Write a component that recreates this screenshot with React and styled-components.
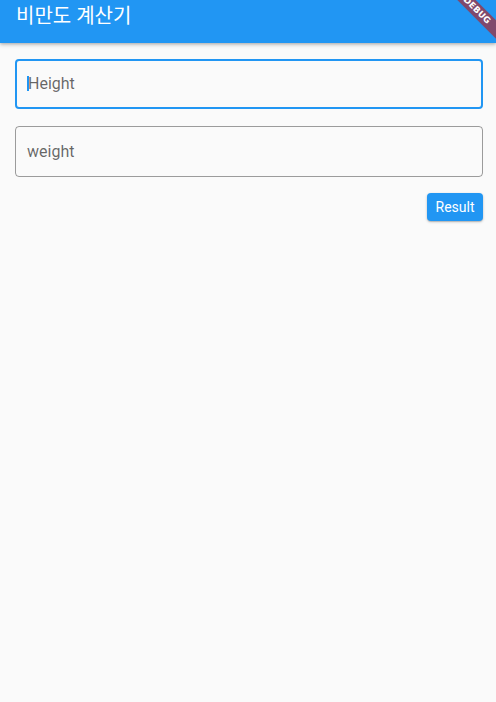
import React from "react";
import styled, { createGlobalStyle } from "styled-components";

const Global = createGlobalStyle`
  html, body { margin: 0; padding: 0; background: #fafafa; }
  body { font-family: Roboto, "Noto Sans", sans-serif; }
`;

const Screen = styled.div`
  position: relative;
  width: 496px;
  height: 702px;
  overflow: hidden;
  background: #fafafa;
`;

const AppBar = styled.header`
  height: 43px;
  background: #2196f3;
  box-shadow: 0 2px 4px rgba(0, 0, 0, 0.2), 0 1px 2px rgba(0, 0, 0, 0.12);
  display: flex;
  align-items: flex-start;
  padding: 2px 16px 0;
  box-sizing: border-box;
`;

const Title = styled.h1`
  margin: 0;
  font-family: Roboto, "Noto Sans CJK KR", sans-serif;
  font-weight: 400;
  font-size: 20px;
  line-height: 28px;
  color: #fff;
`;

const Body = styled.main`
  display: flex;
  flex-direction: column;
  padding: 16px 13px 0 15px;
`;

const Field = styled.div`
  position: relative;
  box-sizing: border-box;
  border-radius: 4px;
  border: ${(p) => (p.$focused ? "2px solid #2196f3" : "1px solid rgba(0,0,0,0.38)")};
  padding-left: ${(p) => (p.$focused ? "11px" : "11px")};
  display: flex;
  align-items: center;
  margin-bottom: ${(p) => p.$mb || 0}px;
  height: ${(p) => p.$h}px;
`;

const Placeholder = styled.span`
  font-family: Roboto, sans-serif;
  font-size: 16px;
  color: rgba(0, 0, 0, 0.6);
  line-height: 20px;
`;

const Cursor = styled.span`
  position: absolute;
  left: 10px;
  top: 15px;
  width: 2px;
  height: 15px;
  background: #2196f3;
`;

const Actions = styled.div`
  display: flex;
  justify-content: flex-end;
  margin-top: 16px;
`;

const Button = styled.button`
  height: 28px;
  width: 56px;
  border: none;
  border-radius: 4px;
  background: #2196f3;
  color: #fff;
  font-family: Roboto, sans-serif;
  font-size: 14px;
  font-weight: 400;
  padding: 0;
  box-shadow: 0 1px 3px rgba(0, 0, 0, 0.2), 0 1px 1px rgba(0, 0, 0, 0.14);
`;

const Banner = styled.div`
  position: absolute;
  left: 437px;
  top: 3.5px;
  width: 80px;
  height: 13px;
  transform: rotate(45deg);
  background: rgba(183, 28, 28, 0.63);
  color: #fff;
  font-family: "DejaVu Sans", sans-serif;
  font-weight: 700;
  font-size: 8.5px;
  line-height: 13px;
  text-align: center;
  letter-spacing: 0.2px;
`;

export default function App() {
  return (
    <Screen>
      <Global />
      <AppBar>
        <Title>비만도 계산기</Title>
      </AppBar>
      <Body>
        <Field $focused $h={50} $mb={17}>
          <Cursor />
          <Placeholder>Height</Placeholder>
        </Field>
        <Field $h={51}>
          <Placeholder>weight</Placeholder>
        </Field>
        <Actions>
          <Button>Result</Button>
        </Actions>
      </Body>
      <Banner>DEBUG</Banner>
    </Screen>
  );
}
